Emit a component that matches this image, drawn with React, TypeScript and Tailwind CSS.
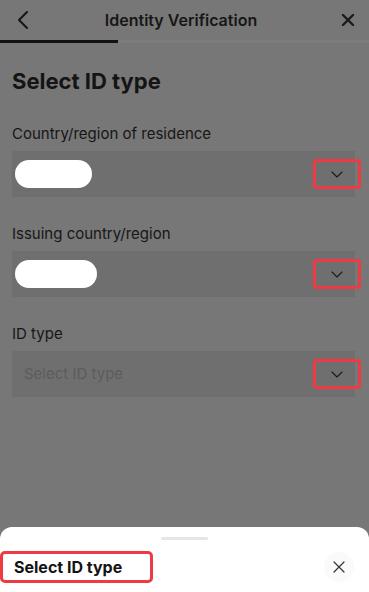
import React from "react";

function Chevron() {
  return (
    <svg width="12" height="7" viewBox="0 0 12 7" fill="none">
      <path d="M1 1l5 5 5-5" stroke="#1a1a1a" strokeWidth="1.1" strokeLinecap="round" strokeLinejoin="round" />
    </svg>
  );
}

function Field({ label, pillW, placeholder }: { label: string; pillW?: number; placeholder?: string }) {
  return (
    <div className="flex flex-col">
      <div className="text-[15px] leading-[20px] text-[#161616] mb-[7px]">{label}</div>
      <div className="h-[46px] bg-[#6f6f6f] flex items-center justify-between pl-[3px]">
        {pillW ? (
          <div className="h-[28px] bg-white rounded-full" style={{ width: pillW }} />
        ) : (
          <div className="pl-[9px] text-[15px] text-[#5c5c5c]">{placeholder}</div>
        )}
        <div className="w-[48px] h-[30px] border-[3px] border-[#ee3b43] rounded-[4px] flex items-center justify-center mr-[-6px]">
          <Chevron />
        </div>
      </div>
    </div>
  );
}

export default function App() {
  return (
    <div
      className="w-[369px] h-[592px] bg-[#777777] relative overflow-hidden"
      style={{ fontFamily: "Inter, 'Noto Sans', sans-serif" }}
    >
      <div className="h-[40px] flex items-center px-[16px]">
        <div className="w-[28px] flex items-center">
          <svg width="14" height="20" viewBox="0 0 14 20" fill="none">
            <path d="M11 2L3 10l8 8" stroke="#151515" strokeWidth="2" strokeLinecap="round" strokeLinejoin="round" />
          </svg>
        </div>
        <div className="flex-1 text-center pr-[7px] text-[16px] font-semibold text-[#161616]">Identity Verification</div>
        <div className="w-[28px] flex items-center justify-end">
          <svg width="14" height="14" viewBox="0 0 14 14" fill="none" className="mr-[-2px]">
            <path d="M2 2l10 10M12 2L2 12" stroke="#1a1a1a" strokeWidth="2.4" strokeLinecap="round" />
          </svg>
        </div>
      </div>
      <div className="h-[3px] bg-[#7c7c7c] flex">
        <div className="w-[118px] h-[3px] bg-[#111111]" />
      </div>
      <div className="px-[12px]">
        <div className="mt-[23px] text-[22px] font-bold text-[#141414] leading-[30px]">Select ID type</div>
        <div className="mt-[28px] flex flex-col gap-[27px] w-[343px]">
          <Field label="Country/region of residence" pillW={77} />
          <Field label="Issuing country/region" pillW={82} />
          <Field label="ID type" placeholder="Select ID type" />
        </div>
      </div>
      <div className="absolute left-0 right-0 top-[527px] bottom-0 bg-white rounded-t-[12px]">
        <div className="mx-auto mt-[10px] w-[47px] h-[3px] rounded-full bg-[#e6e6e6]" />
        <div className="mt-[11px] flex items-center justify-between">
          <div className="w-[153px] h-[32px] border-[3px] border-[#ee3b43] rounded-[5px] flex items-center pl-[11px]">
            <span className="text-[16px] font-bold text-[#141414]">Select ID type</span>
          </div>
          <div className="w-[30px] h-[30px] rounded-full bg-[#fafafa] flex items-center justify-center mr-[15px]">
            <svg width="12" height="12" viewBox="0 0 12 12" fill="none">
              <path d="M1 1l10 10M11 1L1 11" stroke="#333" strokeWidth="1.2" strokeLinecap="round" />
            </svg>
          </div>
        </div>
      </div>
    </div>
  );
}
